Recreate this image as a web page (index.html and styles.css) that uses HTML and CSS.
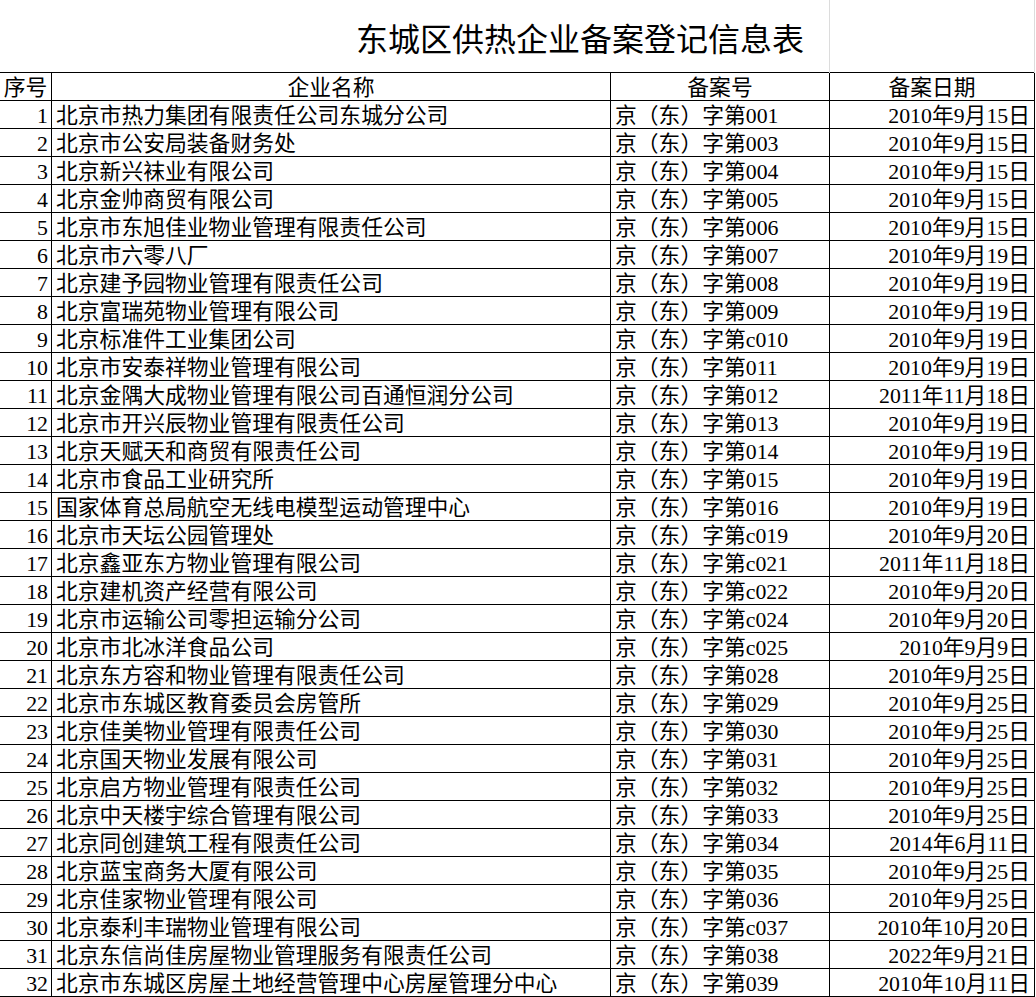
FILE: index.html
```html
<!DOCTYPE html>
<html lang="zh-CN">
<head>
<meta charset="utf-8">
<title>东城区供热企业备案登记信息表</title>
<link rel="stylesheet" href="styles.css">
</head>
<body>
<div class="title-row">
  <div class="title-cell">东城区供热企业备案登记信息表</div>
  <div class="title-blank"></div>
</div>
<div class="sheet">
  <div class="c h">序号</div><div class="c h">企业名称</div><div class="c h">备案号</div><div class="c h">备案日期</div>
  <div class="c n">1</div><div class="c t">北京市热力集团有限责任公司东城分公司</div><div class="c t">京（东）字第001</div><div class="c d">2010年9月15日</div>
  <div class="c n">2</div><div class="c t">北京市公安局装备财务处</div><div class="c t">京（东）字第003</div><div class="c d">2010年9月15日</div>
  <div class="c n">3</div><div class="c t">北京新兴袜业有限公司</div><div class="c t">京（东）字第004</div><div class="c d">2010年9月15日</div>
  <div class="c n">4</div><div class="c t">北京金帅商贸有限公司</div><div class="c t">京（东）字第005</div><div class="c d">2010年9月15日</div>
  <div class="c n">5</div><div class="c t">北京市东旭佳业物业管理有限责任公司</div><div class="c t">京（东）字第006</div><div class="c d">2010年9月15日</div>
  <div class="c n">6</div><div class="c t">北京市六零八厂</div><div class="c t">京（东）字第007</div><div class="c d">2010年9月19日</div>
  <div class="c n">7</div><div class="c t">北京建予园物业管理有限责任公司</div><div class="c t">京（东）字第008</div><div class="c d">2010年9月19日</div>
  <div class="c n">8</div><div class="c t">北京富瑞苑物业管理有限公司</div><div class="c t">京（东）字第009</div><div class="c d">2010年9月19日</div>
  <div class="c n">9</div><div class="c t">北京标准件工业集团公司</div><div class="c t">京（东）字第c010</div><div class="c d">2010年9月19日</div>
  <div class="c n">10</div><div class="c t">北京市安泰祥物业管理有限公司</div><div class="c t">京（东）字第011</div><div class="c d">2010年9月19日</div>
  <div class="c n">11</div><div class="c t">北京金隅大成物业管理有限公司百通恒润分公司</div><div class="c t">京（东）字第012</div><div class="c d">2011年11月18日</div>
  <div class="c n">12</div><div class="c t">北京市开兴辰物业管理有限责任公司</div><div class="c t">京（东）字第013</div><div class="c d">2010年9月19日</div>
  <div class="c n">13</div><div class="c t">北京天赋天和商贸有限责任公司</div><div class="c t">京（东）字第014</div><div class="c d">2010年9月19日</div>
  <div class="c n">14</div><div class="c t">北京市食品工业研究所</div><div class="c t">京（东）字第015</div><div class="c d">2010年9月19日</div>
  <div class="c n">15</div><div class="c t">国家体育总局航空无线电模型运动管理中心</div><div class="c t">京（东）字第016</div><div class="c d">2010年9月19日</div>
  <div class="c n">16</div><div class="c t">北京市天坛公园管理处</div><div class="c t">京（东）字第c019</div><div class="c d">2010年9月20日</div>
  <div class="c n">17</div><div class="c t">北京鑫亚东方物业管理有限公司</div><div class="c t">京（东）字第c021</div><div class="c d">2011年11月18日</div>
  <div class="c n">18</div><div class="c t">北京建机资产经营有限公司</div><div class="c t">京（东）字第c022</div><div class="c d">2010年9月20日</div>
  <div class="c n">19</div><div class="c t">北京市运输公司零担运输分公司</div><div class="c t">京（东）字第c024</div><div class="c d">2010年9月20日</div>
  <div class="c n">20</div><div class="c t">北京市北冰洋食品公司</div><div class="c t">京（东）字第c025</div><div class="c d">2010年9月9日</div>
  <div class="c n">21</div><div class="c t">北京东方容和物业管理有限责任公司</div><div class="c t">京（东）字第028</div><div class="c d">2010年9月25日</div>
  <div class="c n">22</div><div class="c t">北京市东城区教育委员会房管所</div><div class="c t">京（东）字第029</div><div class="c d">2010年9月25日</div>
  <div class="c n">23</div><div class="c t">北京佳美物业管理有限责任公司</div><div class="c t">京（东）字第030</div><div class="c d">2010年9月25日</div>
  <div class="c n">24</div><div class="c t">北京国天物业发展有限公司</div><div class="c t">京（东）字第031</div><div class="c d">2010年9月25日</div>
  <div class="c n">25</div><div class="c t">北京启方物业管理有限责任公司</div><div class="c t">京（东）字第032</div><div class="c d">2010年9月25日</div>
  <div class="c n">26</div><div class="c t">北京中天楼宇综合管理有限公司</div><div class="c t">京（东）字第033</div><div class="c d">2010年9月25日</div>
  <div class="c n">27</div><div class="c t">北京同创建筑工程有限责任公司</div><div class="c t">京（东）字第034</div><div class="c d">2014年6月11日</div>
  <div class="c n">28</div><div class="c t">北京蓝宝商务大厦有限公司</div><div class="c t">京（东）字第035</div><div class="c d">2010年9月25日</div>
  <div class="c n">29</div><div class="c t">北京佳家物业管理有限公司</div><div class="c t">京（东）字第036</div><div class="c d">2010年9月25日</div>
  <div class="c n">30</div><div class="c t">北京泰利丰瑞物业管理有限公司</div><div class="c t">京（东）字第c037</div><div class="c d">2010年10月20日</div>
  <div class="c n">31</div><div class="c t">北京东信尚佳房屋物业管理服务有限责任公司</div><div class="c t">京（东）字第038</div><div class="c d">2022年9月21日</div>
  <div class="c n">32</div><div class="c t">北京市东城区房屋土地经营管理中心房屋管理分中心</div><div class="c t">京（东）字第039</div><div class="c d">2010年10月11日</div>
</div>
</body>
</html>
```

FILE: styles.css
```css
html, body {
  margin: 0;
  padding: 0;
  background: #ffffff;
}

body {
  color: #000000;
  font-family: "Liberation Serif", "Noto Sans CJK SC", serif;
  width: 1036px;
  overflow: hidden;
}

.title-row {
  display: grid;
  grid-template-columns: 830px 205px;
  height: 72px;
}

.title-cell {
  box-sizing: border-box;
  border-right: 1px solid #dcdcdc;
  font-family: "Noto Sans CJK SC", sans-serif;
  font-size: 32px;
  line-height: 75px;
  padding-left: 356px;
  white-space: nowrap;
}

.title-blank {
  box-sizing: border-box;
  border-right: 1px solid #dcdcdc;
}

.sheet {
  display: grid;
  grid-template-columns: 52px 559px 219px 205px;
  grid-auto-rows: 28px;
  border-top: 1px solid #000000;
  width: 1035px;
}

.c {
  box-sizing: border-box;
  border-right: 1px solid #000000;
  border-bottom: 1px solid #000000;
  font-size: 21.8px;
  line-height: 24px;
  padding-top: 3px;
  white-space: nowrap;
  overflow: hidden;
}

.h {
  text-align: center;
}

.n {
  text-align: right;
  padding-right: 3px;
}

.t {
  text-align: left;
  padding-left: 4px;
}

.d {
  text-align: right;
  padding-right: 4px;
}
```
